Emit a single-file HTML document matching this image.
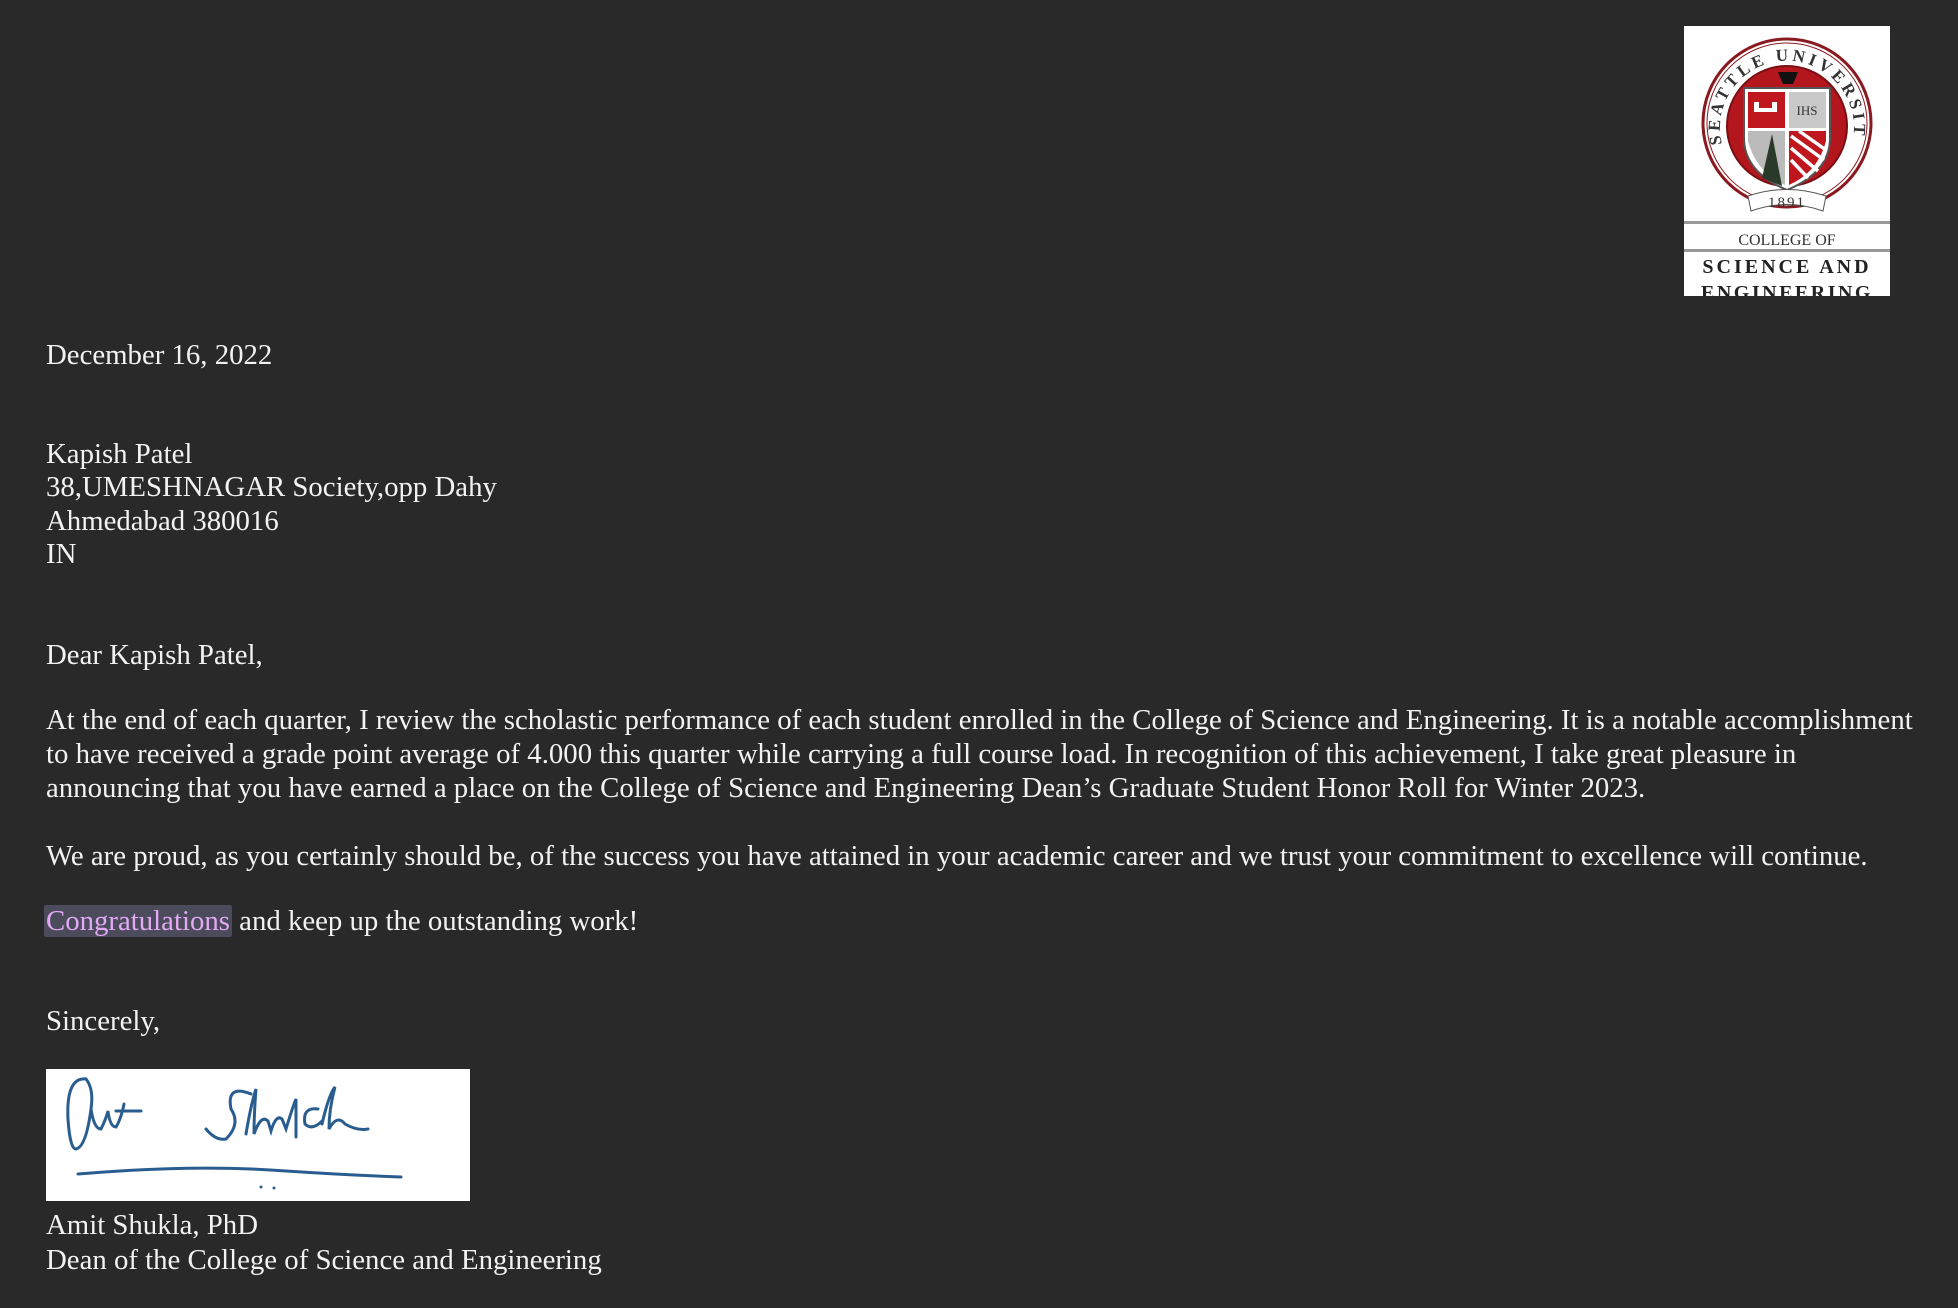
<!DOCTYPE html>
<html><head><meta charset="utf-8"><style>
html,body{margin:0;padding:0;background:#292929;width:1958px;height:1308px;overflow:hidden}
.t{position:absolute;left:46px;font-family:"Liberation Serif",serif;font-size:28.8px;line-height:34px;color:#f2f2f2;white-space:nowrap}
.hl{background:#4b4b5c;color:#e3a9f5;border-radius:2px;padding:0 2px;margin-left:-2px}
</style></head><body>
<svg style="position:absolute;left:1684px;top:26px" width="206" height="270" viewBox="0 0 206 270">
<rect width="206" height="270" fill="#fff"/>
<circle cx="103" cy="97" r="84" fill="#fff" stroke="#8a1a1f" stroke-width="3"/>
<circle cx="103" cy="97" r="80" fill="none" stroke="#8a1a1f" stroke-width="1"/>
<circle cx="103" cy="100" r="60" fill="#b3161c" stroke="#7a0f14" stroke-width="2"/>
<path id="arc" d="M38 118 A67 67 0 1 1 168 118" fill="none"/>
<text font-family="Liberation Serif,serif" font-size="17" font-weight="bold" fill="#333" letter-spacing="3.6"><textPath href="#arc">SEATTLE UNIVERSITY</textPath></text>
<path d="M60 62 H146 V112 Q146 146 103 164 Q60 146 60 112 Z" fill="#fff" stroke="#555" stroke-width="2"/>
<rect x="64" y="66" width="37" height="36" fill="#c0161d"/>
<path d="M70 76 h5 v10 h-5z M88 76 h5 v10 h-5z M73 82 h17 v4 h-17z" fill="#fff"/>
<rect x="105" y="66" width="37" height="36" fill="#c9c9c9"/>
<text x="123" y="89" font-family="Liberation Serif,serif" font-size="13" text-anchor="middle" fill="#333">IHS</text>
<path d="M64 105 H101 V159 Q72 146 64 115 Z" fill="#bbb"/>
<path d="M88 108 L98 160 L78 152 Z" fill="#2a3a2a"/>
<path d="M105 105 H142 V115 Q134 146 105 159 Z" fill="#c0161d"/>
<path d="M107 110 L140 134 M107 122 L134 145 M107 134 L124 152 M115 105 L142 124" stroke="#fff" stroke-width="3.5"/>
<path d="M94 46 L114 46 L109 58 L99 58 Z" fill="#111"/>
<path d="M64 170 Q103 157 142 170 L139 185 Q103 172 67 185 Z" fill="#fff" stroke="#555"/>
<text x="103" y="181" font-family="Liberation Serif,serif" font-size="15" text-anchor="middle" fill="#333" letter-spacing="2">1891</text>
<rect x="0" y="195" width="206" height="3" fill="#999"/>
<rect x="0" y="223" width="206" height="3" fill="#999"/>
<text x="103" y="219" font-family="Liberation Serif,serif" font-size="16" text-anchor="middle" fill="#333">COLLEGE OF</text>
<text x="103" y="247" font-family="Liberation Serif,serif" font-size="20" font-weight="bold" text-anchor="middle" fill="#222" letter-spacing="3">SCIENCE AND</text>
<text x="103" y="273" font-family="Liberation Serif,serif" font-size="20" font-weight="bold" text-anchor="middle" fill="#222" letter-spacing="2.5">ENGINEERING</text>
</svg>
<div class="t" style="top:338px">December 16, 2022</div>
<div class="t" style="top:438px;line-height:33.4px">Kapish Patel<br>38,UMESHNAGAR Society,opp Dahy<br>Ahmedabad 380016<br>IN</div>
<div class="t" style="top:638px">Dear Kapish Patel,</div>
<div class="t" style="top:704px;line-height:33.8px">At the end of each quarter, I review the scholastic performance of each student enrolled in the College of Science and Engineering. It is a notable accomplishment<br>to have received a grade point average of 4.000 this quarter while carrying a full course load. In recognition of this achievement, I take great pleasure in<br>announcing that you have earned a place on the College of Science and Engineering Dean’s Graduate Student Honor Roll for Winter 2023.</div>
<div class="t" style="top:839px">We are proud, as you certainly should be, of the success you have attained in your academic career and we trust your commitment to excellence will continue.</div>
<div class="t" style="top:904px"><span class="hl">Congratulations</span> and keep up the outstanding work!</div>
<div class="t" style="top:1004px">Sincerely,</div>
<svg style="position:absolute;left:46px;top:1069px" width="424" height="132" viewBox="0 0 424 132">
<rect width="424" height="132" fill="#fff"/>
<g fill="none" stroke="#2a5d8f" stroke-width="3" stroke-linecap="round">
<path d="M40 10 Q20 8 22 50 Q24 80 30 80 Q40 78 45 40 Q48 20 40 10 M45 40 Q48 60 55 60 Q60 50 62 42 Q64 58 70 58 Q75 50 78 35 M70 42 H95"/>
<path d="M205 25 Q180 15 185 40 Q195 55 180 70 Q170 72 160 60 M200 65 Q205 35 210 20 Q208 45 208 65 Q215 45 222 52 L225 62 Q230 45 236 50 L240 60 Q246 40 250 30 L250 68 M272 40 Q256 38 259 55 Q266 62 276 52 M276 55 Q283 25 289 18 Q283 40 283 60 Q291 45 299 55 Q311 62 322 60"/>
<path d="M32 105 Q150 95 240 102 Q300 106 355 108"/>
</g>
<circle cx="215" cy="118" r="1.5" fill="#2a5d8f"/><circle cx="228" cy="119" r="1.5" fill="#2a5d8f"/>
</svg>
<div class="t" style="top:1208px;line-height:35px">Amit Shukla, PhD<br>Dean of the College of Science and Engineering</div>
</body></html>
